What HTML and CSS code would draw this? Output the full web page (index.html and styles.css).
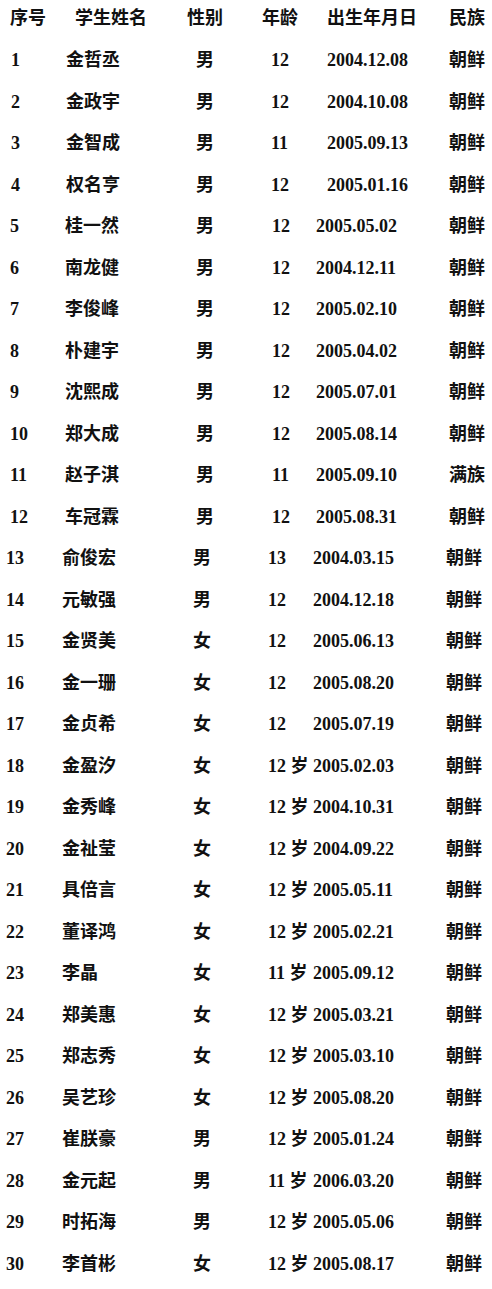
FILE: index.html
```html
<!DOCTYPE html>
<html lang="zh-CN">
<head>
<meta charset="utf-8">
<title>学生名单</title>
<link rel="stylesheet" href="styles.css">
</head>
<body>
<div class="roster">
  <div class="row head"><span>序号</span><span>学生姓名</span><span>性别</span><span>年龄</span><span>出生年月日</span><span>民族</span></div>

  <div class="row ga"><span>1</span><span class="cjk">金哲丞</span><span class="cjk">男</span><span>12</span><span>2004.12.08</span><span class="cjk">朝鲜</span></div>
  <div class="row ga"><span>2</span><span class="cjk">金政宇</span><span class="cjk">男</span><span>12</span><span>2004.10.08</span><span class="cjk">朝鲜</span></div>
  <div class="row ga"><span>3</span><span class="cjk">金智成</span><span class="cjk">男</span><span>11</span><span>2005.09.13</span><span class="cjk">朝鲜</span></div>
  <div class="row ga"><span>4</span><span class="cjk">权名亨</span><span class="cjk">男</span><span>12</span><span>2005.01.16</span><span class="cjk">朝鲜</span></div>

  <div class="row gb"><span>5</span><span class="cjk">桂一然</span><span class="cjk">男</span><span>12</span><span>2005.05.02</span><span class="cjk">朝鲜</span></div>
  <div class="row gb"><span>6</span><span class="cjk">南龙健</span><span class="cjk">男</span><span>12</span><span>2004.12.11</span><span class="cjk">朝鲜</span></div>
  <div class="row gb"><span>7</span><span class="cjk">李俊峰</span><span class="cjk">男</span><span>12</span><span>2005.02.10</span><span class="cjk">朝鲜</span></div>
  <div class="row gb"><span>8</span><span class="cjk">朴建宇</span><span class="cjk">男</span><span>12</span><span>2005.04.02</span><span class="cjk">朝鲜</span></div>
  <div class="row gb"><span>9</span><span class="cjk">沈熙成</span><span class="cjk">男</span><span>12</span><span>2005.07.01</span><span class="cjk">朝鲜</span></div>
  <div class="row gb"><span>10</span><span class="cjk">郑大成</span><span class="cjk">男</span><span>12</span><span>2005.08.14</span><span class="cjk">朝鲜</span></div>
  <div class="row gb"><span>11</span><span class="cjk">赵子淇</span><span class="cjk">男</span><span>11</span><span>2005.09.10</span><span class="cjk">满族</span></div>
  <div class="row gb"><span>12</span><span class="cjk">车冠霖</span><span class="cjk">男</span><span>12</span><span>2005.08.31</span><span class="cjk">朝鲜</span></div>

  <div class="row gc"><span>13</span><span class="cjk">俞俊宏</span><span class="cjk">男</span><span>13</span><span>2004.03.15</span><span class="cjk">朝鲜</span></div>
  <div class="row gc"><span>14</span><span class="cjk">元敏强</span><span class="cjk">男</span><span>12</span><span>2004.12.18</span><span class="cjk">朝鲜</span></div>
  <div class="row gc"><span>15</span><span class="cjk">金贤美</span><span class="cjk">女</span><span>12</span><span>2005.06.13</span><span class="cjk">朝鲜</span></div>
  <div class="row gc"><span>16</span><span class="cjk">金一珊</span><span class="cjk">女</span><span>12</span><span>2005.08.20</span><span class="cjk">朝鲜</span></div>
  <div class="row gc"><span>17</span><span class="cjk">金贞希</span><span class="cjk">女</span><span>12</span><span>2005.07.19</span><span class="cjk">朝鲜</span></div>

  <div class="row gc"><span>18</span><span class="cjk">金盈汐</span><span class="cjk">女</span><span>12 岁</span><span>2005.02.03</span><span class="cjk">朝鲜</span></div>
  <div class="row gc"><span>19</span><span class="cjk">金秀峰</span><span class="cjk">女</span><span>12 岁</span><span>2004.10.31</span><span class="cjk">朝鲜</span></div>
  <div class="row gc"><span>20</span><span class="cjk">金祉莹</span><span class="cjk">女</span><span>12 岁</span><span>2004.09.22</span><span class="cjk">朝鲜</span></div>
  <div class="row gc"><span>21</span><span class="cjk">具倍言</span><span class="cjk">女</span><span>12 岁</span><span>2005.05.11</span><span class="cjk">朝鲜</span></div>
  <div class="row gc"><span>22</span><span class="cjk">董译鸿</span><span class="cjk">女</span><span>12 岁</span><span>2005.02.21</span><span class="cjk">朝鲜</span></div>
  <div class="row gc"><span>23</span><span class="cjk">李晶</span><span class="cjk">女</span><span>11 岁</span><span>2005.09.12</span><span class="cjk">朝鲜</span></div>
  <div class="row gc"><span>24</span><span class="cjk">郑美惠</span><span class="cjk">女</span><span>12 岁</span><span>2005.03.21</span><span class="cjk">朝鲜</span></div>
  <div class="row gc"><span>25</span><span class="cjk">郑志秀</span><span class="cjk">女</span><span>12 岁</span><span>2005.03.10</span><span class="cjk">朝鲜</span></div>
  <div class="row gc"><span>26</span><span class="cjk">吴艺珍</span><span class="cjk">女</span><span>12 岁</span><span>2005.08.20</span><span class="cjk">朝鲜</span></div>
  <div class="row gc"><span>27</span><span class="cjk">崔朕豪</span><span class="cjk">男</span><span>12 岁</span><span>2005.01.24</span><span class="cjk">朝鲜</span></div>
  <div class="row gc"><span>28</span><span class="cjk">金元起</span><span class="cjk">男</span><span>11 岁</span><span>2006.03.20</span><span class="cjk">朝鲜</span></div>
  <div class="row gc"><span>29</span><span class="cjk">时拓海</span><span class="cjk">男</span><span>12 岁</span><span>2005.05.06</span><span class="cjk">朝鲜</span></div>
  <div class="row gc"><span>30</span><span class="cjk">李首彬</span><span class="cjk">女</span><span>12 岁</span><span>2005.08.17</span><span class="cjk">朝鲜</span></div>
</div>
</body>
</html>
```

FILE: styles.css
```css
html, body {
  margin: 0;
  padding: 0;
  background: #ffffff;
}

body {
  font-family: "Liberation Serif", "Noto Sans CJK SC", serif;
  font-size: 18px;
  font-weight: bold;
  color: #111111;
}

.roster {
  width: 492px;
  padding-top: 1.5px;
}

.row {
  display: grid;
  grid-template-columns: var(--cols);
  padding-left: var(--pad);
  height: 41.5px;
  line-height: 41.5px;
  white-space: nowrap;
}

.row.head {
  --pad: 10px;
  --cols: 65px 112px 75px 65px 122px auto;
  height: 38.5px;
  line-height: 33px;
}

.row.head span,
.cjk {
  font-weight: 600;
}

.row.ga {
  --pad: 11px;
  --cols: 55px 130px 75px 56px 122px auto;
}

.row.gb {
  --pad: 10px;
  --cols: 55px 131px 76px 44px 133px auto;
}

.row.gc {
  --pad: 6px;
  --cols: 56px 131px 75px 45px 133px auto;
}
```
